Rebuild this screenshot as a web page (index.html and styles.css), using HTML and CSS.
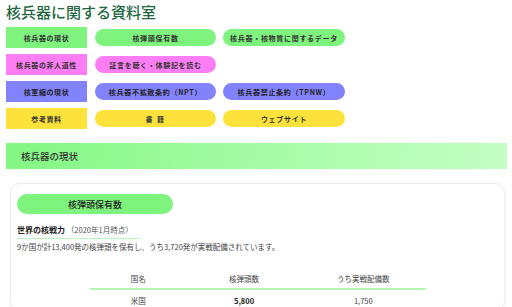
FILE: index.html
```html
<!DOCTYPE html>
<html lang="ja">
<head>
    <meta charset="UTF-8">
    <meta name="viewport" content="width=device-width, initial-scale=1.0">
    <title>核兵器に関する資料室</title>
    <link rel="stylesheet" href="styles.css">
</head>
<body>
    <h1 class="page-title">核兵器に関する資料室</h1>

    <div class="menu">
        <div class="menu-label green">核兵器の現状</div>
        <a href="#" class="menu-pill green">核弾頭保有数</a>
        <a href="#" class="menu-pill green">核兵器・核物質に関するデータ</a>

        <div class="menu-label pink">核兵器の非人道性</div>
        <a href="#" class="menu-pill pink">証言を聴く・体験記を読む</a>
        <div></div>

        <div class="menu-label purple">核軍縮の現状</div>
        <a href="#" class="menu-pill purple">核兵器不拡散条約（NPT）</a>
        <a href="#" class="menu-pill purple">核兵器禁止条約（TPNW）</a>

        <div class="menu-label yellow">参考資料</div>
        <a href="#" class="menu-pill yellow wide">書 籍</a>
        <a href="#" class="menu-pill yellow">ウェブサイト</a>
    </div>

    <h2 class="section-title">核兵器の現状</h2>

    <div class="card">
        <div class="card-pill">核弾頭保有数</div>

        <h3 class="sub-title">世界の核戦力 <span class="sub-date">（2020年1月時点）</span></h3>
        <p class="lead">9か国が計13,400発の核弾頭を保有し、うち3,720発が実戦配備されています。</p>

        <table class="data-table">
            <thead>
                <tr>
                    <th class="col-name">国名</th>
                    <th class="col-total">核弾頭数</th>
                    <th class="col-deployed">うち実戦配備数</th>
                </tr>
            </thead>
            <tbody>
                <tr>
                    <td>米国</td>
                    <td class="num-bold">5,800</td>
                    <td>1,750</td>
                </tr>
            </tbody>
        </table>
    </div>
</body>
</html>
```

FILE: styles.css
```css
body {
    font-family: "Noto Sans CJK JP", "Noto Sans", sans-serif;
    margin: 0;
    padding: 0 5px 0 6px;
    color: #333;
    background-color: #fff;
}

.page-title {
    margin: 4px 0 8px;
    font-size: 15px;
    line-height: 15px;
    font-weight: 500;
    color: #22683f;
}

.menu {
    display: grid;
    grid-template-columns: 81px 121px 121px;
    grid-auto-rows: 21px;
    column-gap: 8px;
    row-gap: 6px;
}

.menu .menu-pill:nth-child(3n) {
    margin-left: -1px;
}

.menu-label {
    display: flex;
    align-items: center;
    justify-content: center;
    font-size: 7px;
    font-weight: bold;
    letter-spacing: 0.6px;
    color: #333;
}

.menu-pill {
    display: flex;
    align-items: center;
    justify-content: center;
    align-self: center;
    height: 17px;
    border-radius: 9px;
    font-size: 7px;
    font-weight: bold;
    letter-spacing: 0.7px;
    color: #333;
    text-decoration: none;
}

.menu-pill.wide {
    letter-spacing: 1.5px;
}

.green {
    background-color: #7ef37e;
}

.pink {
    background-color: #fd7ef4;
}

.purple {
    background-color: #8282fc;
    color: #222;
}

.yellow {
    background-color: #fde23c;
}

.section-title {
    margin: 14px 0 0;
    height: 26px;
    padding-left: 15px;
    display: flex;
    align-items: center;
    font-size: 9.5px;
    font-weight: 500;
    color: #333;
    background: linear-gradient(100deg, #82f782 0%, #a6fba6 50%, #c4fec4 100%);
    box-shadow: 0 0 4px rgba(0, 0, 0, 0.05);
}

.card {
    margin: 14px 2px 0 4px;
    padding: 10px 6px 0;
    border: 1px solid #e9eeee;
    border-radius: 10px;
    box-shadow: 0 0 5px rgba(0, 0, 0, 0.05);
}

.card-pill {
    width: 156px;
    height: 20px;
    display: flex;
    align-items: center;
    justify-content: center;
    border-radius: 10px;
    background-color: #7ef37e;
    font-size: 9px;
    font-weight: 500;
    color: #222;
}

.sub-title {
    display: inline-block;
    margin: 4px 0 0;
    padding: 0 8px 3px 0;
    font-size: 8px;
    line-height: 10px;
    font-weight: bold;
    color: #222;
    border-bottom: 1px solid #b9f5b9;
}

.sub-date {
    font-size: 7.5px;
    font-weight: normal;
    color: #555;
}

.lead {
    margin: 3px 0 0;
    font-size: 7.5px;
    line-height: 10px;
    color: #444;
}

.data-table {
    width: 336px;
    margin: 17px auto 0;
    border-collapse: collapse;
    font-size: 7.5px;
    line-height: 10px;
    color: #444;
}

.data-table th {
    font-weight: normal;
    padding: 5px 0 4px;
    border-bottom: 2px solid #b4f5b4;
}

.data-table td {
    text-align: center;
    padding: 6px 0 4px;
}

.col-name {
    width: 29%;
}

.col-total {
    width: 34%;
}

.col-deployed {
    width: 37%;
}

.num-bold {
    font-weight: bold;
    color: #222;
}
```
